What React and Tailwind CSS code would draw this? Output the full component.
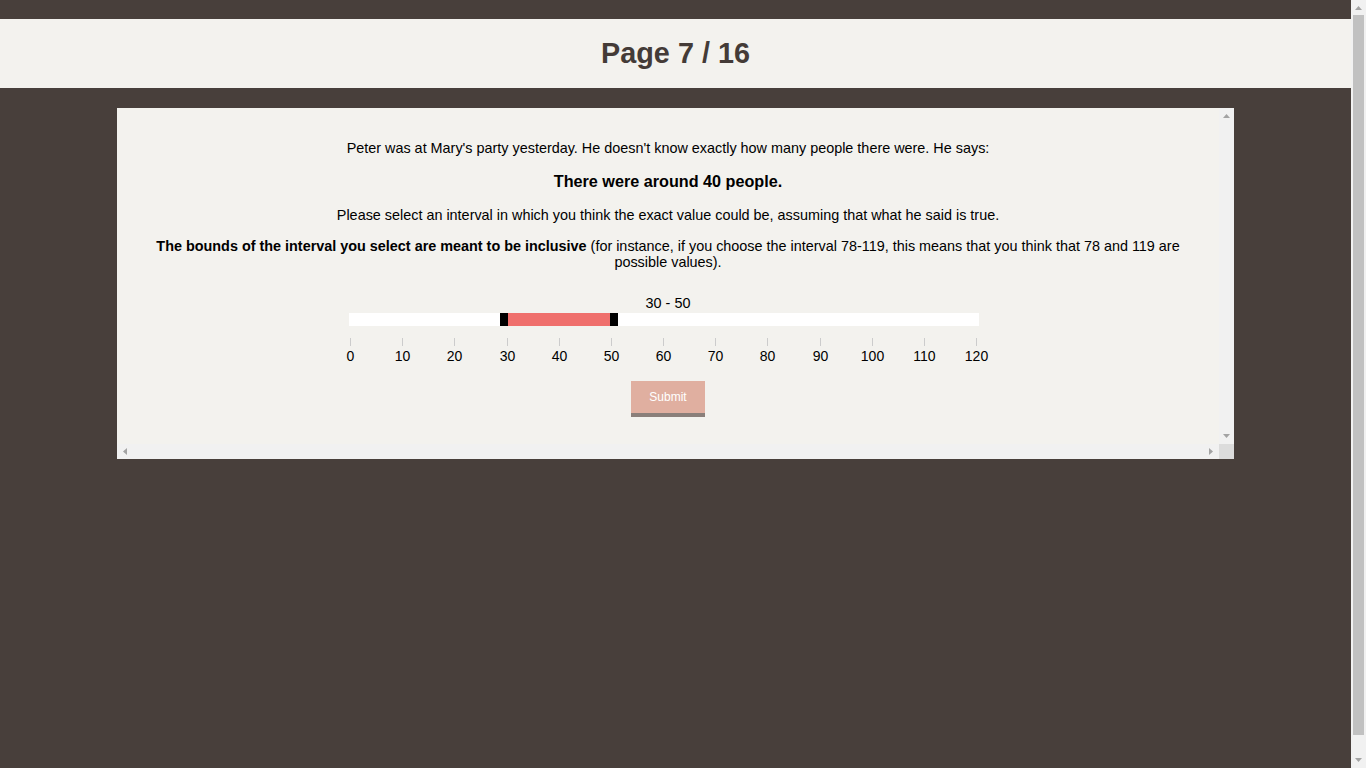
import React, { useState } from "react";

const MIN = 0;
const MAX = 120;
const TRACK_W = 630;
const ticks = [0, 10, 20, 30, 40, 50, 60, 70, 80, 90, 100, 110, 120];

function pos(v) {
  return ((v - MIN) / (MAX - MIN)) * (TRACK_W - 4) + 1.5;
}

// small scrollbar arrow glyph
function Arrow({ dir }) {
  const pts = {
    up: "0,4 7,4 3.5,0",
    down: "0,0 7,0 3.5,4",
    left: "4,0 4,7 0,3.5",
    right: "0,0 0,7 4,3.5",
  }[dir];
  const vertical = dir === "up" || dir === "down";
  return (
    <svg width={vertical ? 7 : 4} height={vertical ? 4 : 7} viewBox={vertical ? "0 0 7 4" : "0 0 4 7"}>
      <polygon points={pts} fill="#a3a3a3" />
    </svg>
  );
}

function RangeSlider({ low, high }) {
  return (
    <div className="flex flex-col items-center">
      <div className="text-[14.4px] leading-[18px] text-black">
        {low} - {high}
      </div>
      <div className="mt-[1px] mr-[8px] flex flex-col">
        <div className="relative h-[13px] w-[630px] bg-white">
          <div
            className="absolute top-0 h-[13px] bg-[#ef6f6c]"
            style={{ left: pos(low) + 1, width: pos(high) - pos(low) - 2 }}
          ></div>
          <div className="absolute top-0 h-[13px] w-[8px] bg-black" style={{ left: pos(low) - 7 }}></div>
          <div className="absolute top-0 h-[13px] w-[8px] bg-black" style={{ left: pos(high) - 1 }}></div>
        </div>
        <div className="relative mt-[12px] h-[27px] w-[630px]">
          {ticks.map((t) => (
            <div
              key={t}
              className="absolute top-0 flex w-[41px] flex-col items-center"
              style={{ left: Math.floor(pos(t)) - 20 }}
            >
              <div className="h-[8px] w-px bg-[#cccccc]"></div>
              <div className="mt-[1px] text-[14px] leading-[18px] text-black">{t}</div>
            </div>
          ))}
        </div>
      </div>
    </div>
  );
}

export default function App() {
  const [range] = useState({ low: 30, high: 50 });

  return (
    <div
      className="flex h-screen overflow-hidden bg-[#483f3b]"
      style={{ fontFamily: '"Liberation Sans", Arial, sans-serif' }}
    >
      <div className="flex-1 pt-[19px]">
        {/* Header */}
        <div className="flex h-[69px] items-center justify-center bg-[#f3f2ee]">
          <h1 className="text-[28.8px] font-bold text-[#443b37]">Page 7 / 16</h1>
        </div>

        {/* Question frame */}
        <div className="mx-[117px] mt-[20px] flex h-[351px] flex-col bg-[#f3f2ee]">
          <div className="flex min-h-0 flex-1">
            <div className="flex-1 px-[30px] pt-[31px] text-center text-black">
              <p className="text-[14.4px] leading-[18px]">
                Peter was at Mary's party yesterday. He doesn't know exactly how many people there were. He says:
              </p>
              <p className="mt-[14px] text-[16.2px] font-bold leading-[20px]">There were around 40 people.</p>
              <p className="mt-[15px] text-[14.4px] leading-[18px]">
                Please select an interval in which you think the exact value could be, assuming that what he said is
                true.
              </p>
              <p className="mt-[14px] text-[14.4px] leading-[16px]">
                <b>The bounds of the interval you select are meant to be inclusive</b> (for instance, if you choose the
                interval 78-119, this means that you think that 78 and 119 are possible values).
              </p>
              <div className="mt-[24px]">
                <RangeSlider low={range.low} high={range.high} />
              </div>
              <div className="mt-[16px] flex justify-center">
                <button className="h-[36px] w-[74px] border-b-4 border-[#8a7f7a] bg-[#e0afa0] text-[12px] text-white">
                  Submit
                </button>
              </div>
            </div>
            {/* inner vertical scrollbar */}
            <div className="flex w-[15px] flex-col items-center justify-between bg-[#f1f1f1] py-[6px]">
              <Arrow dir="up" />
              <Arrow dir="down" />
            </div>
          </div>
          {/* inner horizontal scrollbar */}
          <div className="flex h-[15px]">
            <div className="flex flex-1 items-center justify-between bg-[#f1f1f1] px-[6px]">
              <Arrow dir="left" />
              <Arrow dir="right" />
            </div>
            <div className="w-[15px] bg-[#dcdcdc]"></div>
          </div>
        </div>
      </div>

      {/* page scrollbar */}
      <div className="flex w-[15px] flex-col items-center bg-[#f1f1f1]">
        <div className="flex h-[15px] items-center">
          <Arrow dir="up" />
        </div>
        <div className="h-[720px] w-[11px] bg-[#c1c1c1]"></div>
        <div className="flex flex-1 items-end pb-[6px]">
          <Arrow dir="down" />
        </div>
      </div>
    </div>
  );
}
